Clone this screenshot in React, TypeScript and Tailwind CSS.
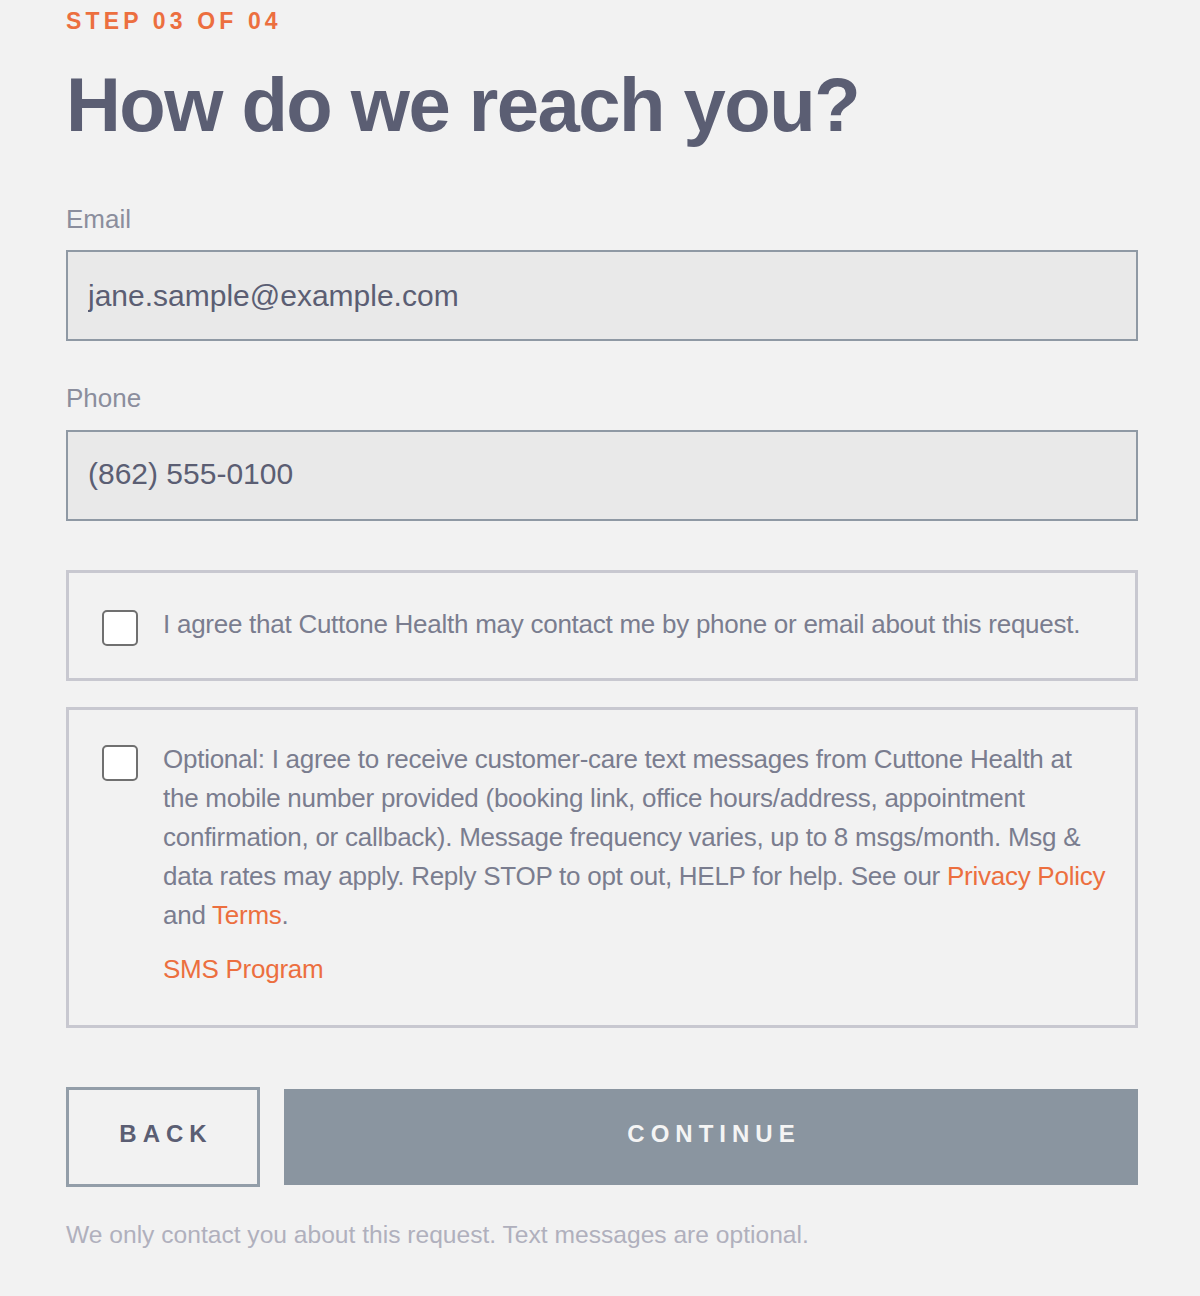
import { useState } from "react";

const font = { fontFamily: '"Liberation Sans", Arial, sans-serif' };

function Checkbox({ checked, onChange }: { checked: boolean; onChange: (v: boolean) => void }) {
  return (
    <button
      type="button"
      role="checkbox"
      aria-checked={checked}
      onClick={() => onChange(!checked)}
      className="mt-[5px] h-[36px] w-[36px] shrink-0 rounded-[5px] border-2 border-[#707070] bg-white"
    />
  );
}

export default function App() {
  const [email, setEmail] = useState("jane.sample@example.com");
  const [phone, setPhone] = useState("(862) 555-0100");
  const [agree, setAgree] = useState(false);
  const [sms, setSms] = useState(false);

  return (
    <div className="min-h-[1296px] bg-[#f2f2f2]" style={font}>
      <div className="ml-[66px] w-[1072px] pt-[10px]">
        <p className="text-[23px] font-bold uppercase leading-none tracking-[0.18em] text-[#ec6f3f]">
          Step 03 of 04
        </p>
        <h1 className="mt-[34px] text-[76px] font-bold leading-none tracking-[-0.02em] text-[#5b5e73]">
          How do we reach you?
        </h1>

        <form className="mt-[63px]" onSubmit={(e) => e.preventDefault()}>
          <label htmlFor="email" className="block text-[26px] leading-none text-[#8b8e9d]">
            Email
          </label>
          <input
            id="email"
            type="email"
            value={email}
            onChange={(e) => setEmail(e.target.value)}
            className="mt-[18px] block h-[91px] w-full border-2 border-[#8f99a4] bg-[#e9e9e9] pl-5 text-[30px] text-[#5b5e73] outline-none"
          />

          <label htmlFor="phone" className="mt-[44px] block text-[26px] leading-none text-[#8b8e9d]">
            Phone
          </label>
          <input
            id="phone"
            type="tel"
            value={phone}
            onChange={(e) => setPhone(e.target.value)}
            className="mt-[19px] block h-[91px] w-full border-2 border-[#8f99a4] bg-[#e9e9e9] pl-5 pb-[3px] text-[30px] text-[#5b5e73] outline-none"
          />

          <div className="mt-[49px] flex gap-[25px] border-[3px] border-[#c8c8d0] px-[33px] py-[32px]">
            <Checkbox checked={agree} onChange={setAgree} />
            <p className="text-[26px] leading-[39px] tracking-[-0.01em] text-[#7a7d8f]">
              I agree that Cuttone Health may contact me by phone or email about this request.
            </p>
          </div>

          {/* line breaks follow the reference wrap */}
          <div className="mt-[26px] flex gap-[25px] border-[3px] border-[#c8c8d0] pl-[33px] pr-[12px] pt-[30px] pb-[36px]">
            <Checkbox checked={sms} onChange={setSms} />
            <div className="whitespace-nowrap text-[26px] leading-[39px] tracking-[-0.01em] text-[#7a7d8f]">
              <p>
                Optional: I agree to receive customer-care text messages from Cuttone Health at
                <br />
                the mobile number provided (booking link, office hours/address, appointment
                <br />
                confirmation, or callback). Message frequency varies, up to 8 msgs/month. Msg &amp;
                <br />
                data rates may apply. Reply STOP to opt out, HELP for help. See our{" "}
                <a href="#" className="text-[#ec6f3f]">
                  Privacy Policy
                </a>
                <br />
                and{" "}
                <a href="#" className="text-[#ec6f3f]">
                  Terms
                </a>
                .
              </p>
              <a href="#" className="mt-[15px] block text-[#ec6f3f]">
                SMS Program
              </a>
            </div>
          </div>

          <div className="mt-[59px] flex items-center gap-[24px]">
            <button
              type="button"
              className="h-[100px] w-[194px] border-[3px] border-[#939ea9] pb-[6px] pl-[0.25em] text-[24px] font-bold uppercase tracking-[0.25em] text-[#5b5e73]"
            >
              Back
            </button>
            <button
              type="submit"
              className="h-[96px] flex-1 pb-[6px] pl-[0.25em] bg-[#8a95a0] text-[24px] font-bold uppercase tracking-[0.25em] text-[#f4f4f4]"
            >
              Continue
            </button>
          </div>
        </form>

        <p className="mt-[36px] text-[24.6px] leading-none text-[#b0b0bd]">
          We only contact you about this request. Text messages are optional.
        </p>
      </div>
    </div>
  );
}
